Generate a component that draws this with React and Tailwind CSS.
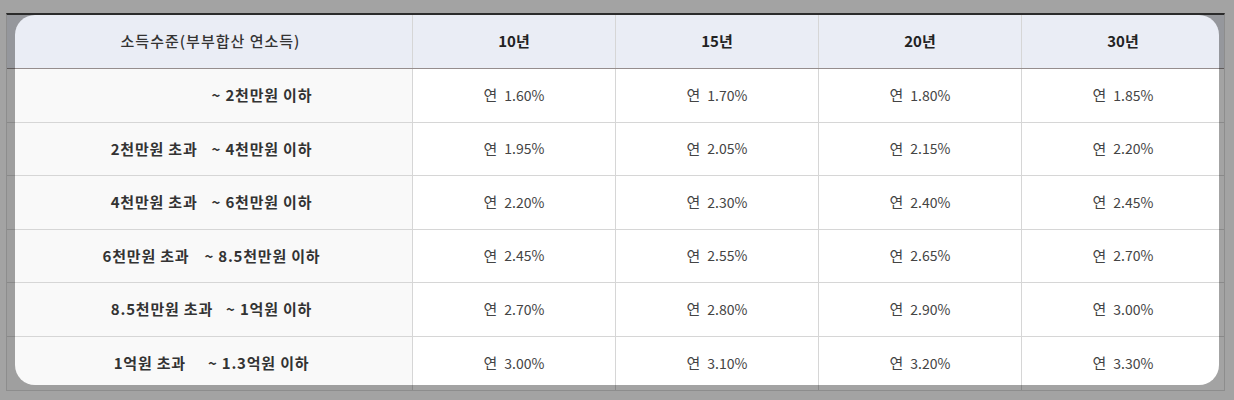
import React from "react";

const font = { fontFamily: '"Noto Sans CJK KR", "Noto Sans", sans-serif' };

const rows = [
  { l: "", r: "~ 2천만원 이하", g: "w-[14px]", v: ["1.60", "1.70", "1.80", "1.85"] },
  { l: "2천만원 초과", r: "~ 4천만원 이하", g: "w-[14px]", v: ["1.95", "2.05", "2.15", "2.20"] },
  { l: "4천만원 초과", r: "~ 6천만원 이하", g: "w-[14px]", v: ["2.20", "2.30", "2.40", "2.45"] },
  { l: "6천만원 초과", r: "~ 8.5천만원 이하", g: "w-[15px]", v: ["2.45", "2.55", "2.65", "2.70"] },
  { l: "8.5천만원 초과", r: "~ 1억원 이하", g: "w-[13px]", v: ["2.70", "2.80", "2.90", "3.00"] },
  { l: "1억원 초과", r: "~ 1.3억원 이하", g: "w-[22px]", v: ["3.00", "3.10", "3.20", "3.30"] },
];

const years = ["10년", "15년", "20년", "30년"];

export default function App() {
  return (
    <div className="relative w-[1234px] h-[400px] overflow-hidden bg-white" style={font}>
      <div className="pt-[13px] pl-[6px]">
        <div className="w-[1219px] border-t-2 border-t-[#444] border-x border-b border-x-[#dddddd] border-b-[#dddddd]">
          <div className="grid grid-cols-[406px_203px_203px_203px_202px] h-[54px] bg-[#eaedf5] border-b border-b-[#958d8d]">
            <div className="flex items-center justify-center pl-[2px] border-r border-[#d6d6d6] text-[15px] tracking-[1px] font-medium text-[#333]">
              소득수준(부부합산 연소득)
            </div>
            {years.map((y, i) => (
              <div
                key={y}
                className={
                  i < 3
                    ? "flex items-center justify-center border-r border-[#d6d6d6] text-[15px] font-bold text-[#222]"
                    : "flex items-center justify-center text-[15px] font-bold text-[#222]"
                }
              >
                {y}
              </div>
            ))}
          </div>
          {rows.map((row, ri) => (
            <div
              key={ri}
              className={
                ri < 5
                  ? "grid grid-cols-[406px_203px_203px_203px_202px] h-[53.5px] border-b border-b-[#d6d6d6]"
                  : "grid grid-cols-[406px_203px_203px_203px_202px] h-[53.5px]"
              }
            >
              <div className="flex items-center justify-center pl-[4px] bg-[#f9f9f9] border-r border-[#d6d6d6] text-[15px] tracking-[0.8px] font-bold text-[#333] whitespace-pre">
                {row.l ? (
                  <span>{row.l}</span>
                ) : (
                  <span className="invisible">2천만원 초과</span>
                )}
                <span className={row.g} />
                <span>{row.r}</span>
              </div>
              {row.v.map((v, i) => (
                <div
                  key={i}
                  className={
                    i < 3
                      ? "flex items-center justify-center bg-white border-r border-[#d6d6d6] text-[#444]"
                      : "flex items-center justify-center bg-white text-[#444]"
                  }
                >
                  <span className="text-[15px]">연</span>
                  <span className="ml-[7px] text-[14px]">{v}%</span>
                </div>
              ))}
            </div>
          ))}
        </div>
      </div>
      <div className="absolute left-[15px] top-[15px] w-[1204px] h-[370px] rounded-[20px] shadow-[0_0_0_9999px_rgba(0,0,0,0.36)] pointer-events-none" />
    </div>
  );
}
